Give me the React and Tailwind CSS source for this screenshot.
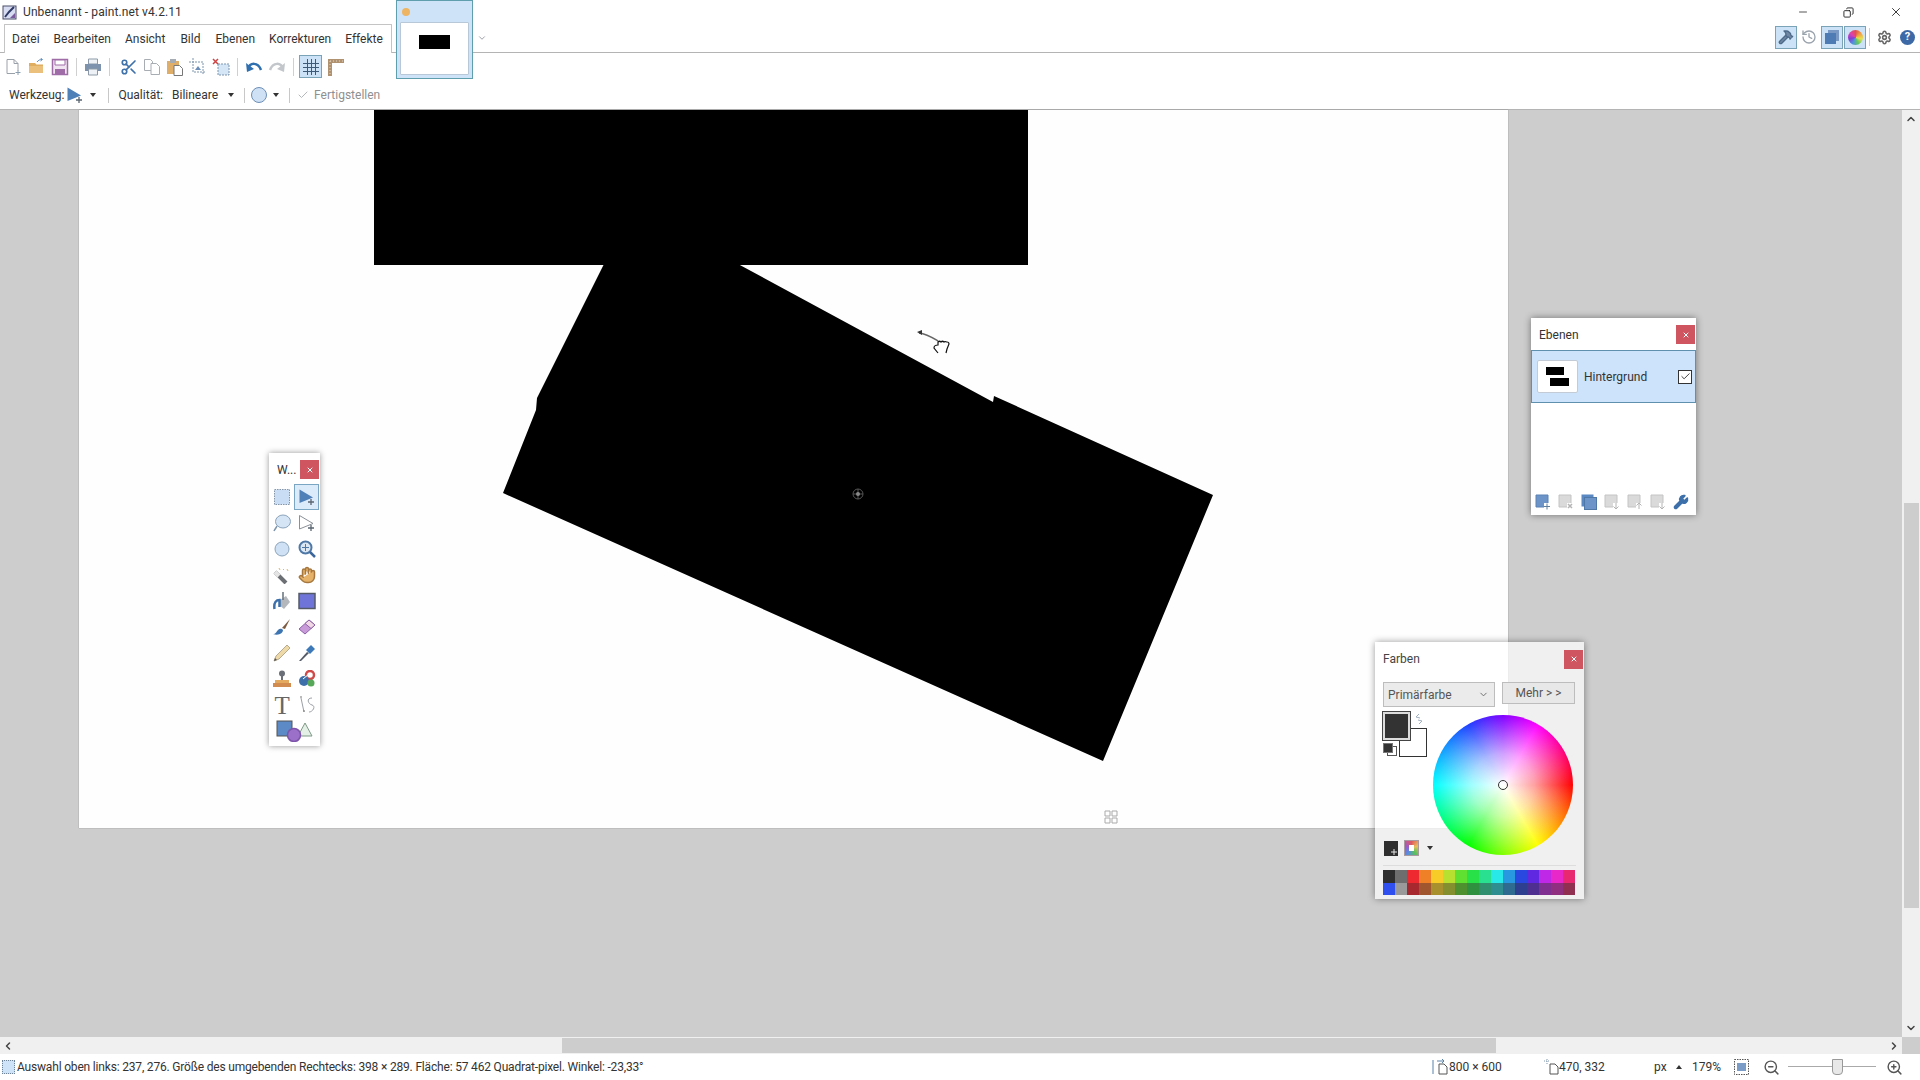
import { Check, Hand, History, Settings, Wrench, Hammer, Scissors, ZoomIn, ZoomOut, ChevronDown, ChevronLeft, ChevronRight, ChevronUp, X, Minus, Copy } from 'lucide-react';

const FONT = "font-['Roboto','Liberation_Sans',sans-serif]";

const MENU = [
  ['Datei', 'ml-[7px]'],
  ['Bearbeiten', 'ml-[14px]'],
  ['Ansicht', 'ml-[14px]'],
  ['Bild', 'ml-[15px]'],
  ['Ebenen', 'ml-[15px]'],
  ['Korrekturen', 'ml-[14px]'],
  ['Effekte', 'ml-[14px]'],
];

const PALETTE_TOP = ['#2e2e2e', '#6e6e6e', '#ee2a30', '#f08028', '#f8cc28', '#b8e030', '#60e030', '#28e048', '#28e090', '#28e8e8', '#2898e0', '#2848e0', '#6028e0', '#c028e8', '#e828c8', '#e82870'];
const PALETTE_BOTTOM = ['#2f4fee', '#9a9a9a', '#a8282f', '#a0562f', '#a8902f', '#84902f', '#4e902f', '#2f903f', '#2f8f6f', '#2f8f90', '#2f6a90', '#2f3f90', '#4f2f90', '#7f2f90', '#902f80', '#902f50'];

function Svg({ size = 18, children }) {
  return (
    <svg width={size} height={size} viewBox="0 0 18 18" fill="none" className="shrink-0">
      {children}
    </svg>
  );
}

function Sep() {
  return <div className="mx-[2px] h-[18px] w-px shrink-0 bg-[#d0d0d0]" />;
}

function Caret() {
  return <div className="h-0 w-0 border-x-[3px] border-t-[4px] border-x-transparent border-t-[#333]" />;
}

const NewIcon = () => (
  <Svg><path d="M3 1.500h7l4 4v7M3 1.500v14h8M10 1.500v4h4" stroke="#9aa0a8" /><path d="M14 12v5M11.500 14.500h5" stroke="#8aa0b0" /></Svg>
);
const OpenIcon = () => (
  <Svg><path d="M1 5h6l1.500 1.500H15V15H1z" fill="#e0ae62" /><path d="M1 8h14v7H1z" fill="#eac07c" /><path d="M9 4c1.500-2 3-2.500 5-2.500M12.500 0l2 1.500-2 1.500" stroke="#5c8fbe" /></Svg>
);
const SaveIcon = () => (
  <Svg><path d="M1.500 1.500h15v15h-15z" fill="#f0e4f0" stroke="#a06ca8" strokeWidth="1.500" /><path d="M4 2h10v5H4z" fill="#fff" stroke="#a06ca8" /><path d="M4 11h10v5H4z" fill="#a06ca8" /></Svg>
);
const PrintIcon = () => (
  <Svg><path d="M4.500 1h9v5h-9z" fill="#eef2f6" stroke="#8d99a6" /><path d="M1 6h16v7H1z" fill="#7d93ad" /><path d="M4.500 11h9v6h-9z" fill="#eef2f6" stroke="#8d99a6" /></Svg>
);
const CopyIcon = () => (
  <Svg><path d="M1.500 1.500h6l2 2v9h-8z" fill="#fff" stroke="#a8adb3" /><path d="M8 5.500h5.500l3 3v8H8z" fill="#fff" stroke="#a8adb3" /></Svg>
);
const PasteIcon = () => (
  <Svg><path d="M1 3h12v13H1z" fill="#dfae68" /><path d="M4 1h6v4H4z" fill="#a6acb3" /><path d="M8 7.500h5.500l3 3v7H8z" fill="#fff" stroke="#777" /></Svg>
);
const CropIcon = () => (
  <Svg><path d="M4 0v14h13M0 4h14v13" stroke="#7d95ad" strokeDasharray="2 1" /><path d="M6 12l3-4 3 4z" fill="#6a8cb8" /></Svg>
);
const DeselectIcon = () => (
  <Svg><path d="M6 6h11v11H6z" fill="#d5e6f7" stroke="#7d95ad" strokeDasharray="2 1" /><path d="M1 1l5 5M6 1L1 6" stroke="#cc4444" strokeWidth="1.500" /></Svg>
);
const UndoIcon = () => (
  <Svg><path d="M3 11c2-7 10-7 13 1" stroke="#2f6fb0" strokeWidth="2.500" /><path d="M1 5l1 9 7-3z" fill="#2f6fb0" /></Svg>
);
const RedoIcon = () => (
  <Svg><path d="M15 11c-2-7-10-7-13 1" stroke="#c3c7cb" strokeWidth="2.500" /><path d="M17 5l-1 9-7-3z" fill="#c3c7cb" /></Svg>
);
const GridIcon = () => (
  <Svg><path d="M5.500 1v16M9.500 1v16M13.500 1v16M1 5.500h16M1 9.500h16M1 13.500h16" stroke="#3d5a78" /></Svg>
);
const RulerIcon = () => (
  <Svg><path d="M1 1h16v4H5v13H1z" fill="#b09270" /><path d="M3 3h14M3 3v14" stroke="#e6d7c3" strokeDasharray="1 2" /></Svg>
);
const MoveArrow = ({ fill = '#4f80b8', stroke = 'none' }) => (
  <Svg><path d="M1.500 1.500L15 9.500 1.500 15z" fill={fill} stroke={stroke} /><path d="M13 11v6M10 14h6" stroke="#5a6570" strokeWidth="1.300" /></Svg>
);
const RectSelect = () => (
  <Svg><rect x="1.500" y="1.500" width="15" height="15" fill="#c9ddf4" stroke="#8596a8" strokeDasharray="1.500 1" /></Svg>
);
const Lasso = () => (
  <Svg><ellipse cx="10" cy="7.500" rx="7.500" ry="6.500" fill="#d5e5f6" stroke="#8ca4bb" /><path d="M4 12c-1 2-2 3-3 5" stroke="#7d94ab" strokeWidth="1.500" /></Svg>
);
const Ellipse = () => (
  <Svg><circle cx="9" cy="9" r="7" fill="#cfe1f5" stroke="#8ca4bb" /></Svg>
);
const Zoom = () => (
  <Svg><circle cx="7.500" cy="7.500" r="6" fill="#dbe7f3" stroke="#4f78a6" strokeWidth="2" /><path d="M12 12l5 5" stroke="#3d679b" strokeWidth="2.500" /><path d="M7.500 4v7M4 7.500h7" stroke="#4f78a6" /></Svg>
);
const Wand = () => (
  <Svg><path d="M2 6l11 11" stroke="#6c7075" strokeWidth="4" /><path d="M2 6l4 4" stroke="#e4e4e4" strokeWidth="4" /><path d="M6 2l1 2M10 4l1-1M14 3l1 2" stroke="#e7b45c" /></Svg>
);
const Bucket = () => (
  <Svg><path d="M7 8l6-4 4 6-6 7-5-4z" fill="#b4b8bd" /><path d="M10 0v8" stroke="#66707a" strokeWidth="1.500" /><path d="M1.500 17c-1-7 2-9 5-9v7" stroke="#3d70aa" strokeWidth="2.500" /></Svg>
);
const Gradient = () => (
  <Svg><rect x="1" y="1.500" width="16" height="15" fill="#6f75d8" stroke="#555b66" strokeWidth="1.500" /></Svg>
);
const Brush = () => (
  <Svg><path d="M9 10l8-9-5 10z" fill="#7c5a40" /><path d="M0 16c3 0 3-2 5-4 2-2 4-1 5 0 0 3-4 6-10 4z" fill="#3d74b2" /></Svg>
);
const Eraser = () => (
  <Svg><path d="M1 11L11 2l6 5-10 9z" fill="#c89ad8" stroke="#8d62a8" /><path d="M7 5.500l6 5L17 7l-6-5z" fill="#f2d8e4" stroke="#8d62a8" /></Svg>
);
const Pencil = () => (
  <Svg><path d="M1 17l2-5L14 1l3 3L6 15z" fill="#eed9a8" stroke="#b9a98d" /><path d="M1 17l1-3 2 2z" fill="#555" /></Svg>
);
const Pipette = () => (
  <Svg><path d="M1 17l8-9 2 1-8 8z" fill="#555b66" /><path d="M8 6l4 4 5-5-4-4z" fill="#3d78b8" /></Svg>
);
const Stamp = () => (
  <Svg><circle cx="9" cy="3.500" r="3" fill="#6b7078" /><path d="M8 6h2v5H8z" fill="#6b7078" /><path d="M2 10h14v3H2z" fill="#e3aa60" /><path d="M0 13h18v4H0z" fill="#d38c50" /></Svg>
);
const Recolor = () => (
  <Svg><circle cx="12" cy="5" r="4" stroke="#d04a4a" strokeWidth="2.500" /><circle cx="6" cy="11" r="5" fill="#3d70aa" /><circle cx="13" cy="13" r="3.500" fill="#58a85a" /><path d="M5 9l6-5" stroke="#fff" /></Svg>
);
const Curve = () => (
  <Svg><path d="M3 2l3 14M14 2c-6 0-4 6 0 7s1 7-3 7" stroke="#9aa0a6" /><path d="M2 1h2M5 15h2" stroke="#777" /></Svg>
);

function LayerAction({ kind }) {
  const blue = kind === 'add';
  return (
    <svg width="16" height="16" viewBox="0 0 16 16" fill="none" className="shrink-0">
      <path d="M1 1h12v12H1z" fill={blue ? '#6c94c8' : '#dadada'} stroke={blue ? '#5a82b6' : '#c4c4c4'} />
      <path d="M9 9h7v7H9z" fill="#fff" />
      {kind === 'add' && <path d="M12 9.500v6M9 12.500h6" stroke="#5f7f9f" />}
      {kind === 'delete' && <path d="M10 10l4 4M14 10l-4 4" stroke="#b4b4b4" strokeWidth="1.500" />}
      {kind === 'merge' && <path d="M12 9v6M9.500 12.500l2.500 2.500 2.500-2.500" stroke="#b4b4b4" />}
      {kind === 'up' && <path d="M12 15V9M9.500 11.500L12 9l2.500 2.500" stroke="#b4b4b4" />}
      {kind === 'down' && <path d="M12 9v6M9.500 12.500l2.500 2.500 2.500-2.500" stroke="#b4b4b4" />}
    </svg>
  );
}

function ToolCell({ selected, children }) {
  return (
    <div className={`flex h-[26px] w-[25px] items-center justify-center border ${selected ? 'border-[#7aa6c4] bg-[#dcebfa]' : 'border-transparent'}`}>
      {children}
    </div>
  );
}

function CloseButton() {
  return (
    <div className="flex h-[19px] w-[19px] items-center justify-center bg-[#cf5661]">
      <X size={8} color="#fff" strokeWidth={3} />
    </div>
  );
}

function Toolbox() {
  return (
    <div className="absolute left-[269px] top-[453px] flex h-[293px] w-[51px] flex-col bg-white px-px shadow-[0_0_6px_rgba(0,0,0,0.4)]">
      <div className="flex h-[31px] shrink-0 items-center pt-[2px]">
        <span className="ml-[7px] w-[23px] text-[12px] text-[#333]">W...</span>
        <CloseButton />
      </div>
      <div className="grid grid-cols-2 justify-items-center">
        <ToolCell><RectSelect /></ToolCell>
        <ToolCell selected><MoveArrow /></ToolCell>
        <ToolCell><Lasso /></ToolCell>
        <ToolCell><MoveArrow fill="#fff" stroke="#8a9097" /></ToolCell>
        <ToolCell><Ellipse /></ToolCell>
        <ToolCell><Zoom /></ToolCell>
        <ToolCell><Wand /></ToolCell>
        <ToolCell><Hand size={18} fill="#e6b26a" color="#a6783f" /></ToolCell>
        <ToolCell><Bucket /></ToolCell>
        <ToolCell><Gradient /></ToolCell>
        <ToolCell><Brush /></ToolCell>
        <ToolCell><Eraser /></ToolCell>
        <ToolCell><Pencil /></ToolCell>
        <ToolCell><Pipette /></ToolCell>
        <ToolCell><Stamp /></ToolCell>
        <ToolCell><Recolor /></ToolCell>
        <ToolCell><span className="font-['Liberation_Serif',serif] text-[25px] leading-none text-[#666]">T</span></ToolCell>
        <ToolCell><Curve /></ToolCell>
      </div>
      <div className="flex h-[26px] items-center justify-center">
        <svg width="38" height="22" viewBox="0 0 38 22" fill="none">
          <rect x="1" y="1" width="15" height="15" fill="#5b8ac6" stroke="#555" />
          <path d="M29 3l7 13H22z" fill="#e4efe6" stroke="#7f9a88" />
          <circle cx="18" cy="15" r="6.500" fill="#9a70c8" stroke="#7d54aa" strokeWidth="1.500" />
        </svg>
      </div>
    </div>
  );
}

function LayersWindow() {
  return (
    <div className="absolute left-[1531px] top-[318px] flex h-[197px] w-[165px] flex-col bg-white shadow-[0_0_7px_rgba(0,0,0,0.45)]">
      <div className="flex h-[32px] shrink-0 items-center justify-between pl-2 pr-px pt-[1px]">
        <span className="text-[12px] text-[#333]">Ebenen</span>
        <CloseButton />
      </div>
      <div className="flex h-[53px] shrink-0 items-center border border-[#5f90ad] bg-[#cce3fb] pl-[5px] pr-[3px]">
        <div className="flex h-[33px] w-[41px] flex-col items-start rounded-[2px] border border-[#c3ccd6] bg-white pl-2 pt-[6px]">
          <div className="h-2 w-[18px] bg-black" />
          <div className="ml-[4px] mt-[3px] h-2 w-[19px] bg-black" />
        </div>
        <span className="ml-[6px] flex-1 text-[12px] text-[#333]">Hintergrund</span>
        <div className="flex h-[14px] w-[14px] items-center justify-center border border-[#333] bg-white">
          <Check size={11} color="#333" />
        </div>
      </div>
      <div className="flex-1" />
      <div className="mb-[5px] flex items-center gap-[7px] pl-[4px]">
        <LayerAction kind="add" />
        <LayerAction kind="delete" />
        <svg width="16" height="16" viewBox="0 0 16 16" className="shrink-0"><rect x="0.500" y="0.500" width="12" height="12" fill="#5a88c2" /><rect x="3.500" y="3.500" width="12" height="12" fill="#6c94c8" stroke="#4f78a6" /></svg>
        <LayerAction kind="merge" />
        <LayerAction kind="up" />
        <LayerAction kind="down" />
        <Wrench size={16} color="#3d70aa" fill="#3d70aa" />
      </div>
    </div>
  );
}

function ColorsWindow() {
  return (
    <div className="absolute left-[1375px] top-[642px] flex h-[257px] w-[209px] flex-col bg-white/70 pl-2 shadow-[0_0_7px_rgba(0,0,0,0.4)]">
      <div className="flex h-[32px] shrink-0 items-center justify-between pr-px pt-[2px]">
        <span className="text-[12px] text-[#444]">Farben</span>
        <CloseButton />
      </div>
      <div className="mt-2 flex h-[25px] shrink-0 items-start gap-[7px]">
        <div className="flex h-[25px] w-[112px] items-center justify-between border border-[#bdbdbd] bg-[#ebebeb] pl-1 pr-[5px] text-[12px] text-[#555]">
          Primärfarbe
          <ChevronDown size={11} color="#666" />
        </div>
        <div className="flex h-[22px] w-[73px] items-center justify-center border border-[#bdbdbd] bg-[#e8e8e8] text-[12px] text-[#555]">
          Mehr &gt; &gt;
        </div>
      </div>
      <div className="flex h-[150px] shrink-0">
        <div className="flex w-[50px] flex-col justify-between pb-[1px] pt-[5px]">
          <div className="relative h-[46px] w-[45px]">
            <div className="absolute left-[16px] top-[16px] h-[29px] w-[28px] border border-[#333] bg-white" />
            <div className="absolute left-0 top-0 h-[28px] w-[27px] border-2 border-[#ddd] bg-[#333] outline-1 outline-[#444]" />
            <div className="absolute left-[4px] top-[34px] h-[10px] w-[10px] border border-[#555] bg-white" />
            <div className="absolute left-0 top-[31px] h-[10px] w-[10px] border border-[#777] bg-[#333]" />
            <svg className="absolute left-[31px] top-[1px]" width="10" height="12" viewBox="0 0 10 12" fill="none"><path d="M2 4l3-3M2 4l4 1M8 8l-3 3M8 8L4 7" stroke="#9fb0c0" /></svg>
          </div>
          <div className="flex items-center gap-[6px]">
            <div className="ml-px flex h-[15px] w-[15px] items-end justify-end bg-[#2e2e2e]">
              <svg width="8" height="8" viewBox="0 0 8 8" fill="none"><path d="M4 1v6M1 4h6" stroke="#e8e8e8" /></svg>
            </div>
            <div className="h-[16px] w-[16px] border border-[#a89aa0] bg-[conic-gradient(#e05a5a,#e8c05a,#5ac05a,#5a8ae0,#a05ac8,#e05a5a)] p-1"><div className="h-full w-full bg-white" /></div>
            <div className="ml-[2px]"><Caret /></div>
          </div>
        </div>
        <div className="relative mt-[8px] h-[140px] w-[140px] rounded-full bg-[radial-gradient(circle_closest-side,#fff,#ffffffa0_45%,#fff0),conic-gradient(#8000ff,#ff00ff_30deg,#ff0000_90deg,#ffff00_150deg,#00ff00_210deg,#00ffff_270deg,#2040ff_330deg,#8000ff)]">
          <div className="absolute left-[65px] top-[65px] h-[10px] w-[10px] rounded-full border border-[#333] bg-white/30" />
        </div>
      </div>
      <div className="mr-[8px] mt-[8px] border-t border-[#ddd] pt-[4px]">
        <div className="grid w-[192px] grid-cols-[repeat(16,12px)]">
          {PALETTE_TOP.concat(PALETTE_BOTTOM).map((color, i) => (
            <div key={i} className="h-[12.500px]" style={{ backgroundColor: color }} />
          ))}
        </div>
      </div>
    </div>
  );
}

function CanvasDrawing() {
  // canvas origin is 79,110 on the page
  return (
    <svg width="1429" height="718" viewBox="79 110 1429 718" className="block">
      <path d="M374 110H1028V265H374z" fill="#000" />
      <path d="M604 264L738 264L993 402L994 396L1213 495L1103 761L503 493L536 410L537 398z" fill="#000" />
      <circle cx="858" cy="494" r="5" fill="none" stroke="#555" />
      <path d="M853 494h10M858 489v10" stroke="#555" />
      <circle cx="858" cy="494" r="2" fill="#888" />
      <path d="M1105 811h5v5h-5zM1112 811h5v5h-5zM1105 818h5v5h-5zM1112 818h5v5h-5z" fill="none" stroke="#aaa" />
      <path d="M919 333c8 1 14 5 19 8" stroke="#666" strokeWidth="1.500" fill="none" />
      <path d="M917 332l5-2v5z" fill="#333" />
      <path d="M938 353l-4-5c0-2 2-3 4-3l0-3c1-1 2-1 3 0 1-1 2-1 3 0 1-1 2 0 3 0 1 0 2 1 2 2l-2 5-1 4" stroke="#111" strokeWidth="1.200" fill="#fff" />
    </svg>
  );
}

export default function App() {
  return (
    <div className={`relative flex h-screen w-screen flex-col overflow-hidden bg-white text-[#333] ${FONT}`}>
      {/* title bar */}
      <div className="flex h-[24px] shrink-0 items-center pl-[2px]">
        <svg width="15" height="15" viewBox="0 0 15 15" fill="none"><rect x="1" y="1" width="13" height="13" fill="#d8dcf2" stroke="#4a4f68" /><path d="M3 12l4-5 5-5" stroke="#2f3a66" strokeWidth="2" /><path d="M8 13l5-5v5z" fill="#7a5a9c" /></svg>
        <span className="ml-[6px] text-[12px] tracking-[0.1px]">Unbenannt - paint.net v4.2.11</span>
        <div className="ml-auto flex items-center">
          <Minus size={12} color="#555" className="mr-[34px]" />
          <Copy size={11} color="#222" className="mr-[35px] -scale-x-100" />
          <X size={14} color="#222" strokeWidth={1.500} className="mr-[17px]" />
        </div>
      </div>

      {/* menu row */}
      <div className="flex h-[29px] shrink-0 items-stretch border-b border-[#b4b4b4]">
        <div className="relative z-10 -mb-px ml-[4px] flex h-[29px] w-[388px] items-center rounded-t-[1px] border border-b-0 border-[#c4c4c4] bg-white text-[12px]">
          {MENU.map(([name, gap]) => (
            <span key={name} className={gap}>{name}</span>
          ))}
        </div>
        <div className="ml-auto flex items-center pb-[2px] pr-[5px]">
          <div className="flex h-[23px] w-[22px] items-center justify-center border border-[#7aa3b8] bg-[#cce3f7]"><Hammer size={16} color="#4e6a8a" fill="#6f87a3" /></div>
          <div className="ml-px flex w-[22px] justify-center"><History size={16} color="#9ba3ad" /></div>
          <div className="ml-px flex h-[23px] w-[22px] items-center justify-center border border-[#7aa3b8] bg-[#cce3f7]">
            <svg width="16" height="16" viewBox="0 0 16 16"><rect x="4" y="1" width="11" height="11" fill="#7a98c4" /><rect x="1" y="4" width="11" height="11" fill="#4f7bb4" /></svg>
          </div>
          <div className="ml-px flex h-[23px] w-[22px] items-center justify-center border border-[#7aa3b8] bg-[#cce3f7]">
            <div className="h-[15px] w-[15px] rounded-full bg-[conic-gradient(#e05050,#f0a040,#e8e050,#60c860,#5090e0,#8040d0,#e040b0,#e05050)]" />
          </div>
          <div className="ml-[3px] h-[18px] w-px bg-[#d0d0d0]" />
          <Settings size={15} color="#666" strokeWidth={2.500} className="ml-[7px]" />
          <div className="ml-[8px] flex h-[15px] w-[15px] items-center justify-center rounded-full bg-[#3d6aa6] text-[11px] font-bold text-white">?</div>
        </div>
      </div>

      {/* tab thumbnail hangs over the menu and toolbar rows */}
      <div className="absolute left-[396px] top-0 z-20 h-[79px] w-[77px] border border-[#5f9eac] bg-[#cfe3f8] px-[3px] pt-[21px]">
        <div className="absolute left-[5px] top-[7px] h-[8px] w-[8px] rounded-full bg-[#eeb462]" />
        <div className="flex h-[53px] w-full items-start justify-center rounded-[1px] border border-[#b8c8d8] bg-white pt-[12px]">
          <div className="h-[14px] w-[31px] bg-black" />
        </div>
      </div>
      <ChevronDown size={10} color="#8a8f98" className="absolute left-[477px] top-[33px]" />

      {/* tool strip */}
      <div className="flex h-[29px] shrink-0 items-center gap-[5px] pb-[2px] pl-[4px]">
        <NewIcon />
        <span className="-ml-1" />
        <OpenIcon /><SaveIcon />
        <Sep />
        <PrintIcon />
        <Sep />
        <span className="-ml-[2px]" />
        <Scissors size={18} color="#3f72aa" strokeWidth={2.200} />
        <CopyIcon /><PasteIcon /><CropIcon /><DeselectIcon />
        <Sep />
        <UndoIcon /><RedoIcon />
        <Sep />
        <div className="-ml-[2px] flex h-[23px] w-[23px] items-center justify-center border border-[#7aa3b8] bg-[#cce3f7]"><GridIcon /></div>
        <span className="-ml-[5px]" />
        <RulerIcon />
      </div>

      {/* tool options */}
      <div className="flex h-[28px] shrink-0 items-center border-b border-[#b4b4b4] pb-px pl-[9px] text-[12px]">
        <span>Werkzeug:</span>
        <span className="ml-[2px]"><MoveArrow /></span>
        <span className="ml-[6px]"><Caret /></span>
        <div className="ml-[12px] h-[15px] w-px bg-[#c8c8c8]" />
        <span className="ml-[9px]">Qualität:</span>
        <span className="ml-[9px]">Bilineare</span>
        <span className="ml-[10px]"><Caret /></span>
        <div className="ml-[10px] h-[15px] w-px bg-[#c8c8c8]" />
        <div className="ml-[6px] h-[16px] w-[16px] rounded-full border border-[#6d8fb5] bg-[#cfe1f5]" />
        <span className="ml-[6px]"><Caret /></span>
        <div className="ml-[10px] h-[15px] w-px bg-[#c8c8c8]" />
        <Check size={12} color="#b4b8bc" className="ml-[7px]" />
        <span className="ml-[5px] text-[#8f8f8f]">Fertigstellen</span>
      </div>

      {/* workspace with scrollbars */}
      <div className="flex min-h-0 flex-1">
        <div className="min-w-0 flex-1 bg-[#cdcdcd] pl-[79px]">
          <div className="w-[1429px] bg-[#fefefe] shadow-[0_0_1px_#777]">
            <CanvasDrawing />
          </div>
        </div>
        <div className="flex w-[18px] shrink-0 flex-col items-center bg-[#f0f0f0]">
          <ChevronUp size={12} color="#444" strokeWidth={3} className="my-[3px]" />
          <div className="mt-[375px] h-[405px] w-[15px] bg-[#cdcdcd]" />
          <div className="flex-1" />
          <ChevronDown size={12} color="#444" strokeWidth={3} className="my-[3px]" />
        </div>
      </div>
      <div className="flex h-[17px] shrink-0 items-center bg-[#f0f0f0]">
        <ChevronLeft size={12} color="#444" strokeWidth={3} className="ml-[2px]" />
        <div className="ml-[548px] h-[15px] w-[934px] bg-[#cdcdcd]" />
        <ChevronRight size={12} color="#444" strokeWidth={3} className="ml-auto mr-[2px]" />
        <div className="h-full w-[18px] bg-[#cdcdcd]" />
      </div>

      {/* status bar */}
      <div className="flex h-[26px] shrink-0 items-center text-[12px] leading-none">
        <div className="ml-[2px] h-[14px] w-[13px] border border-dotted border-[#6f8396] bg-[#cfe3f8]" />
        <span className="ml-[2px] w-[1415px] whitespace-nowrap tracking-[-0.18px]">Auswahl oben links: 237, 276. Größe des umgebenden Rechtecks: 398 × 289. Fläche: 57 462 Quadrat-pixel. Winkel: -23,33°</span>
        <svg width="16" height="16" viewBox="0 0 16 16" fill="none" className="shrink-0"><path d="M7 5h5l3 3v7H7z" stroke="#555" /><path d="M1 1v14M5 2h7M10 0l2 2-2 2" stroke="#5a82ac" /></svg>
        <span className="ml-px w-[95px] shrink-0">800 × 600</span>
        <svg width="15" height="16" viewBox="0 0 15 16" fill="none" className="shrink-0"><path d="M6 5h5l3 3v7H6z" stroke="#555" /><path d="M0 2h6M3 0v6" stroke="#7d95ad" strokeDasharray="1 1" /></svg>
        <span className="w-[95px] shrink-0">470, 332</span>
        <span className="w-[22px] shrink-0">px</span>
        <div className="h-0 w-0 border-x-[3px] border-b-[4px] border-x-transparent border-b-[#333]" />
        <span className="ml-[10px] w-[42px] shrink-0">179%</span>
        <svg width="15" height="16" viewBox="0 0 15 16" fill="none" className="shrink-0"><rect x="0.500" y="0.500" width="14" height="15" stroke="#555" strokeDasharray="1.500 1" /><rect x="3" y="4" width="9" height="8" fill="#7a9cc6" /></svg>
        <ZoomOut size={17} color="#555" className="ml-[14px]" />
        <div className="relative ml-[8px] h-[16px] w-[88px]">
          <div className="absolute left-0 top-[7px] h-px w-full bg-[#aaa]" />
          <div className="absolute left-[44px] top-0 h-[16px] w-[11px] rounded-b-[4px] border border-[#999] bg-[#e8e8e8]" />
        </div>
        <ZoomIn size={17} color="#555" className="ml-[10px]" />
      </div>

      <Toolbox />
      <LayersWindow />
      <ColorsWindow />
    </div>
  );
}
